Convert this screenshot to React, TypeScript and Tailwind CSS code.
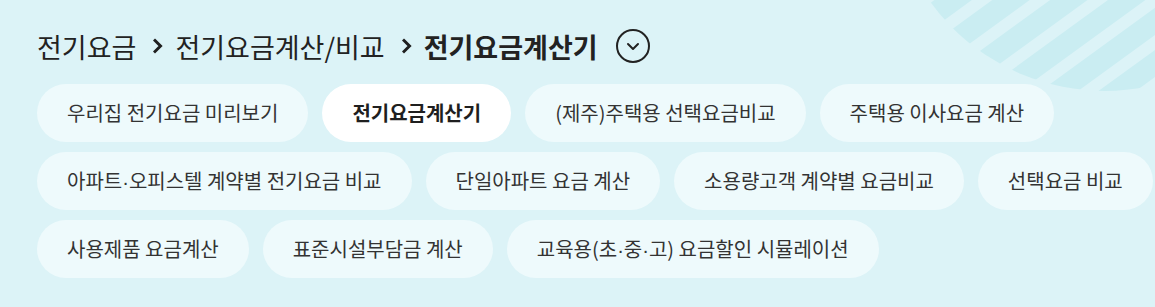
import React from 'react';

const tabs = [
  '우리집 전기요금 미리보기',
  '전기요금계산기',
  '(제주)주택용 선택요금비교',
  '주택용 이사요금 계산',
  '아파트·오피스텔 계약별 전기요금 비교',
  '단일아파트 요금 계산',
  '소용량고객 계약별 요금비교',
  '선택요금 비교',
  '사용제품 요금계산',
  '표준시설부담금 계산',
  '교육용(초·중·고) 요금할인 시뮬레이션',
];

const ACTIVE = '전기요금계산기';

// stripe centres, measured along the normal of the stripe direction
const stripes = [57.7, 91.7, 125.7, 159.7, 193.7, 227.7, 261.7, 295.7, 329.7, 363.7];

const Decoration = () => (
  <svg
    className="absolute top-0 right-0 pointer-events-none"
    width="300"
    height="110"
    viewBox="0 0 300 110"
  >
    <defs>
      <clipPath id="deco-circle">
        <circle cx="250" cy="-125" r="216" />
      </clipPath>
    </defs>
    <g clipPath="url(#deco-circle)" stroke="#caedf2" strokeWidth="22">
      {stripes.map((c) => {
        const px = 0.588 * c;
        const py = 0.809 * c;
        return (
          <line
            key={c}
            x1={px - 0.809 * 500}
            y1={py + 0.588 * 500}
            x2={px + 0.809 * 500}
            y2={py - 0.588 * 500}
          />
        );
      })}
    </g>
  </svg>
);

const Chevron = () => (
  <svg width="10" height="16" viewBox="0 0 10 16" className="ml-[17px] mr-[12px] shrink-0">
    <path d="M2 2.5 L7.5 8 L2 13.5" fill="none" stroke="#1f1f1f" strokeWidth="3" strokeLinecap="square" />
  </svg>
);

// the middle dot is narrow in the original, so set it in a latin face
const Label = ({ text }: { text: string }) => {
  const parts = text.split('·');
  return (
    <>
      {parts.map((p, i) => (
        <React.Fragment key={i}>
          {i > 0 && <span className="font-['Liberation_Sans',sans-serif]">·</span>}
          {p}
        </React.Fragment>
      ))}
    </>
  );
};

export default function App() {
  return (
    <div
      className="relative w-[1155px] h-[307px] overflow-hidden bg-[#dcf3f7] text-[#2b2b2b]"
      style={{ fontFamily: "'Noto Sans CJK KR', 'Noto Sans', sans-serif" }}
    >
      <Decoration />
      <div className="relative pl-[37px] pt-[29px]">
        <div className="flex items-center h-[34px] text-[27px] leading-none text-[#222]">
          <span>전기요금</span>
          <Chevron />
          <span>전기요금계산/비교</span>
          <Chevron />
          <span className="font-bold">전기요금계산기</span>
          <button className="ml-[18px] w-[34px] h-[34px] rounded-full border-2 border-[#222] flex items-center justify-center">
            <svg width="14" height="9" viewBox="0 0 14 9">
              <path d="M2 2 L7 7 L12 2" fill="none" stroke="#222" strokeWidth="2" strokeLinecap="round" strokeLinejoin="round" />
            </svg>
          </button>
        </div>

        <div className="mt-[21px] flex flex-wrap gap-x-[14px] gap-y-[10px]">
          {tabs.map((t) => {
            const active = t === ACTIVE;
            return (
              <button
                key={t}
                className={
                  active
                    ? 'h-[58px] px-[30px] rounded-full bg-white text-[20px] font-bold text-[#1f1f1f] whitespace-nowrap'
                    : 'h-[58px] px-[30px] rounded-full bg-[#eefafc] text-[20px] text-[#333] whitespace-nowrap'
                }
              >
                <Label text={t} />
              </button>
            );
          })}
        </div>
      </div>
    </div>
  );
}
